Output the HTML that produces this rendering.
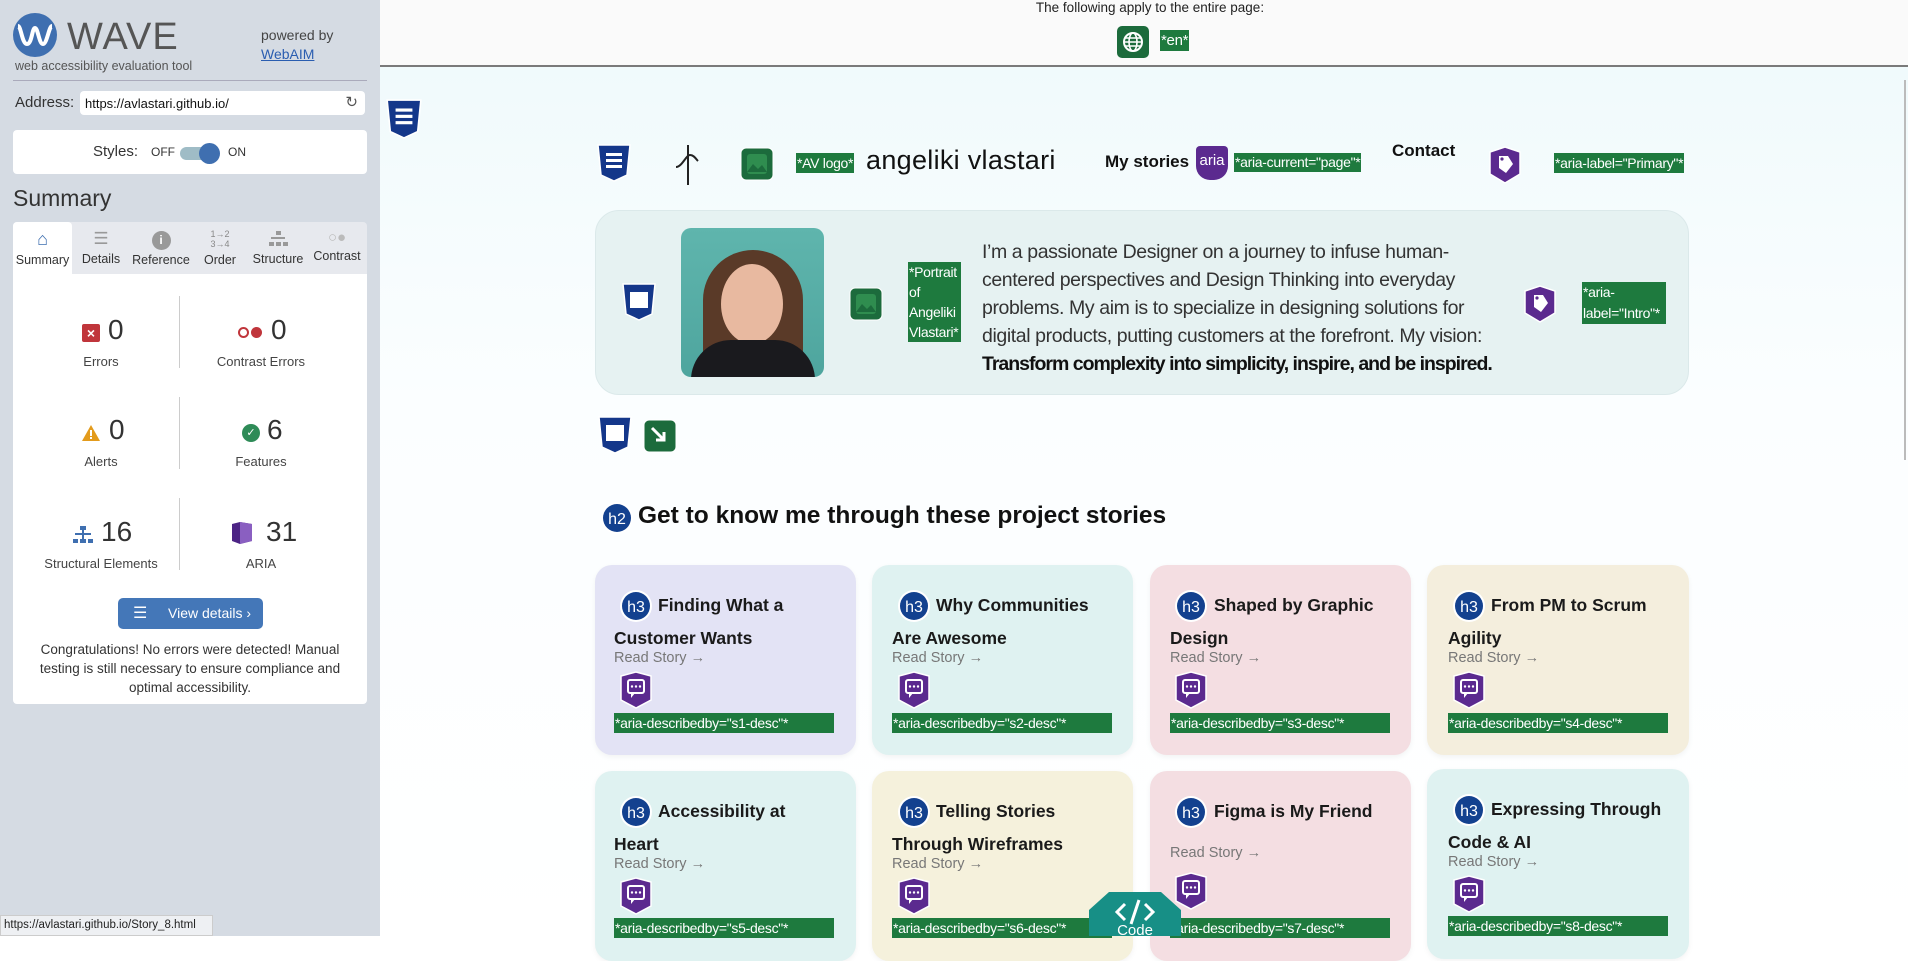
<!DOCTYPE html>
<html><head><meta charset="utf-8">
<style>
*{box-sizing:border-box;margin:0;padding:0}
body{width:1908px;height:936px;overflow:hidden;position:relative;font-family:"Liberation Sans",sans-serif;background:#fff}
.a{position:absolute}
#side{left:0;top:0;width:380px;height:936px;background:#d5dbe3}
#main{left:380px;top:0;width:1528px;height:936px;background:linear-gradient(#eef9fb,#fbfeff 400px,#fff)}
#top{left:380px;top:0;width:1528px;height:67px;background:#fafafa;border-bottom:2px solid #7a7a7a}
.lab{background:#1e7a3e;color:#fff;font-size:14px;line-height:18px;padding:0 1px;white-space:nowrap;letter-spacing:-.3px}
.card{border-radius:17px;box-shadow:0 2px 6px rgba(0,0,0,.05)}
.ct{font-size:17.5px;font-weight:bold;color:#1a1a1a;white-space:nowrap}
.rs{font-size:14.5px;color:#777}
.tab{position:absolute;top:222px;height:52px;font-size:12.5px;color:#333;text-align:center}
.sl{font-size:13px;color:#444;text-align:center;width:160px;position:absolute}
.sn{font-size:28px;color:#333;position:absolute}
</style></head><body>
<div id="side" class="a"></div>
<svg class="a" style="left:12px;top:12px" width="46" height="46" viewBox="0 0 46 46"><circle cx="23" cy="23" r="22" fill="#3f6fb0"/><path d="M6 14c3 0 4 18 9 18s5-16 8-16 4 16 8 16 6-18 9-18" stroke="#fff" stroke-width="4" fill="none"/></svg>
<div class="a" style="left:67px;top:16px;font-size:38px;color:#555;letter-spacing:1px">WAVE</div>
<div class="a" style="left:15px;top:59px;font-size:12.5px;color:#555">web accessibility evaluation tool</div>
<div class="a" style="left:261px;top:27px;font-size:14px;color:#444">powered by</div>
<div class="a" style="left:261px;top:46px;font-size:14px;color:#2a5db0;text-decoration:underline">WebAIM</div>
<div class="a" style="left:13px;top:80px;width:354px;height:1px;background:#aab"></div>
<div class="a" style="left:15px;top:94px;font-size:15px;color:#333">Address:</div>
<div class="a" style="left:80px;top:91px;width:285px;height:24px;background:#fff;border-radius:4px;font-size:13px;padding:5px 5px;color:#111">https://avlastari.github.io/<span style="position:absolute;right:7px;top:2px;font-size:15px;color:#555">&#8635;</span></div>
<div class="a" style="left:13px;top:130px;width:354px;height:44px;background:#fff;border-radius:4px"></div>
<div class="a" style="left:93px;top:143px;font-size:15px;color:#333">Styles:</div>
<div class="a" style="left:151px;top:145px;font-size:12px;color:#333">OFF</div>
<div class="a" style="left:180px;top:147px;width:38px;height:13px;background:#9fbcc6;border-radius:7px"></div>
<div class="a" style="left:199px;top:143px;width:21px;height:21px;background:#3f6fb0;border-radius:50%"></div>
<div class="a" style="left:228px;top:145px;font-size:12px;color:#333">ON</div>
<div class="a" style="left:13px;top:185px;font-size:23px;color:#333">Summary</div>
<div class="a" style="left:13px;top:222px;width:354px;height:52px;background:#e7e9ee;border-radius:4px 4px 0 0"></div>
<div class="tab" style="left:13px;width:59px;background:#fff;border-radius:4px 4px 0 0"><div style="margin-top:7px;color:#3f6fb0;font-size:18px">&#8962;</div><div style="margin-top:3px">Summary</div></div>
<div class="tab" style="left:74px;width:54px"><div style="margin-top:7px;color:#999;font-size:17px">&#9776;</div><div style="margin-top:3px">Details</div></div>
<div class="tab" style="left:130px;width:62px"><div style="margin:9px auto 0;width:19px;height:19px;border-radius:50%;background:#999;color:#fff;font-size:12px;font-weight:bold;line-height:19px">i</div><div style="margin-top:3px">Reference</div></div>
<div class="tab" style="left:196px;width:48px"><div style="margin-top:7px;color:#888;font-size:9px;line-height:10px">1&#8594;2<br>3&#8594;4</div><div style="margin-top:4px">Order</div></div>
<div class="tab" style="left:250px;width:56px"><svg style="margin-top:8px" width="20" height="18"><rect x="8" y="1" width="5" height="4" fill="#999"/><rect x="3" y="7" width="14" height="2" fill="#999"/><rect x="1" y="12" width="5" height="4" fill="#999"/><rect x="8" y="12" width="5" height="4" fill="#999"/><rect x="15" y="12" width="5" height="4" fill="#999"/></svg><div style="margin-top:1px">Structure</div></div>
<div class="tab" style="left:308px;width:58px"><div style="margin-top:7px;color:#bbb;font-size:15px">&#9675;&#9679;</div><div style="margin-top:3px">Contrast</div></div>
<div class="a" style="left:13px;top:274px;width:354px;height:430px;background:#fff;border-radius:0 0 4px 4px"></div>
<div class="a" style="left:179px;top:296px;width:1px;height:72px;background:#ccc"></div>
<div class="a" style="left:179px;top:397px;width:1px;height:72px;background:#ccc"></div>
<div class="a" style="left:179px;top:498px;width:1px;height:72px;background:#ccc"></div>
<div class="a" style="left:82px;top:324px;width:18px;height:18px;background:#c0353b;border-radius:2px;color:#fff;font-size:14px;font-weight:bold;text-align:center;line-height:18px">&#215;</div>
<div class="sn" style="left:108px;top:314px">0</div><div class="sl" style="left:21px;top:354px">Errors</div>
<div class="a" style="left:238px;top:327px;width:11px;height:11px;border:2px solid #c0353b;border-radius:50%"></div><div class="a" style="left:251px;top:327px;width:11px;height:11px;background:#c0353b;border-radius:50%"></div>
<div class="sn" style="left:271px;top:314px">0</div><div class="sl" style="left:181px;top:354px">Contrast Errors</div>
<svg class="a" style="left:81px;top:424px" width="20" height="18"><path d="M10 1L19 17H1z" fill="#e39b1c"/><rect x="9" y="6" width="2" height="6" fill="#fff"/><rect x="9" y="13" width="2" height="2" fill="#fff"/></svg>
<div class="sn" style="left:109px;top:414px">0</div><div class="sl" style="left:21px;top:454px">Alerts</div>
<div class="a" style="left:242px;top:424px;width:18px;height:18px;background:#2e8b57;border-radius:50%;color:#fff;font-size:11px;text-align:center;line-height:18px">&#10003;</div>
<div class="sn" style="left:267px;top:414px">6</div><div class="sl" style="left:181px;top:454px">Features</div>
<svg class="a" style="left:72px;top:525px" width="22" height="20"><rect x="8" y="1" width="6" height="4" fill="#3f6fb0"/><rect x="3" y="8" width="16" height="2" fill="#3f6fb0"/><rect x="1" y="14" width="5" height="4" fill="#3f6fb0"/><rect x="8" y="14" width="6" height="4" fill="#3f6fb0"/><rect x="16" y="14" width="5" height="4" fill="#3f6fb0"/><rect x="10" y="5" width="2" height="9" fill="#3f6fb0"/></svg>
<div class="sn" style="left:101px;top:516px">16</div><div class="sl" style="left:21px;top:556px">Structural Elements</div>
<svg class="a" style="left:230px;top:521px" width="24" height="24"><path d="M2 3l8-2 12 2v17l-12 3-8-3z" fill="#4c2485"/><path d="M10 1l12 2v17l-12 3z" fill="#8a5fc1"/></svg>
<div class="sn" style="left:266px;top:516px">31</div><div class="sl" style="left:181px;top:556px">ARIA</div>
<div class="a" style="left:118px;top:598px;width:145px;height:31px;background:#4477b8;border-radius:5px;color:#fff;font-size:14px;line-height:31px;padding-left:50px">View details ›<span style="position:absolute;left:15px;top:0;font-size:16px">&#9776;</span></div>
<div class="a" style="left:20px;top:640px;width:340px;text-align:center;font-size:13.5px;line-height:19px;color:#333">Congratulations! No errors were detected! Manual testing is still necessary to ensure compliance and optimal accessibility.</div>
<div class="a" style="left:0;top:915px;width:213px;height:21px;background:#eef0f3;border:1px solid #ccc;font-size:11.5px;line-height:19px;padding-left:3px;color:#222">https://avlastari.github.io/Story_8.html</div>

<div id="main" class="a"></div>
<div id="top" class="a"></div>
<div class="a" style="left:1000px;top:0;width:300px;text-align:center;font-size:13.5px;color:#222">The following apply to the entire page:</div>
<svg class="a" style="left:1117px;top:26px" width="32" height="32"><rect width="32" height="32" rx="5" fill="#1c6b3c"/><circle cx="16" cy="16" r="9" stroke="#fff" stroke-width="2" fill="none"/><ellipse cx="16" cy="16" rx="4" ry="9" stroke="#fff" stroke-width="1.6" fill="none"/><path d="M7 16h18M8 12h16M8 20h16" stroke="#fff" stroke-width="1.4"/></svg>
<div class="a lab" style="left:1160px;top:30px;height:21px;line-height:21px;font-size:15px">*en*</div>
<div class="a" style="left:1904px;top:80px;width:2px;height:380px;background:#bbb"></div>

<svg width="0" height="0" style="position:absolute"><defs>
<symbol id="bs" viewBox="0 0 34 38"><path d="M1 1h32l-3 30-13 6-13-6z" fill="#14378a" stroke="#fff" stroke-width="1.5"/><rect x="9" y="9" width="16" height="3" fill="#fff"/><rect x="9" y="15" width="16" height="3" fill="#fff"/><rect x="9" y="21" width="16" height="3" fill="#fff"/></symbol>
<symbol id="bs2" viewBox="0 0 34 38"><path d="M1 1h32l-3 30-13 6-13-6z" fill="#14378a" stroke="#fff" stroke-width="1.5"/><rect x="8" y="9" width="18" height="16" fill="#fff"/></symbol>
<symbol id="gi" viewBox="0 0 34 34"><rect x="1" y="1" width="32" height="32" rx="5" fill="#1c6b3c" stroke="#fff"/><rect x="7" y="7" width="20" height="20" rx="3" fill="#2f8d4f"/><path d="M7 25l6-8 5 5 4-4 5 7z" fill="#1c6b3c"/></symbol>
<symbol id="ps" viewBox="0 0 34 38"><path d="M2 6l15-5 15 5v22l-15 9-15-9z" fill="#5b2a8f" stroke="#fff" stroke-width="1.5"/><path d="M11 10h9l5 8-7 9-7-5z" fill="#fff"/><circle cx="14" cy="13" r="1.6" fill="#5b2a8f"/></symbol>
<symbol id="pc" viewBox="0 0 34 38"><path d="M2 5l15-4 15 4v24l-15 8-15-8z" fill="#5b2a8f" stroke="#fff" stroke-width="1.5"/><rect x="9" y="9" width="16" height="13" rx="2" fill="none" stroke="#fff" stroke-width="2"/><path d="M12 22v5l4-5" fill="#fff"/><circle cx="13" cy="15.5" r="1.2" fill="#fff"/><circle cx="17" cy="15.5" r="1.2" fill="#fff"/><circle cx="21" cy="15.5" r="1.2" fill="#fff"/></symbol>
<symbol id="h" viewBox="0 0 34 34"><circle cx="17" cy="17" r="16" fill="#fff"/><circle cx="17" cy="17" r="14" fill="#13418f"/></symbol>
</defs></svg>

<svg class="a" style="left:386px;top:99px" width="36" height="40"><use href="#bs"/></svg>

<svg class="a" style="left:597px;top:144px" width="34" height="38"><use href="#bs"/></svg>
<svg class="a" style="left:668px;top:142px" width="46" height="46"><path d="M20 3v40M8 25c6 0 10-12 14-12s6 4 8 6" stroke="#222" stroke-width="2" fill="none"/></svg>
<svg class="a" style="left:740px;top:147px" width="34" height="34"><use href="#gi"/></svg>
<div class="a lab" style="left:796px;top:153px;height:20px;line-height:20px;font-size:14px">*AV logo*</div>
<div class="a" style="left:866px;top:145px;font-size:27px;color:#111;letter-spacing:.3px">angeliki vlastari</div>
<div class="a" style="left:1105px;top:152px;font-size:17px;font-weight:bold;color:#111">My stories</div>
<div class="a" style="left:1196px;top:146px;width:32px;height:34px;background:#5b2a8f;border-radius:4px 4px 14px 14px;color:#fff;font-size:15px;line-height:30px;text-align:center">aria</div>
<div class="a lab" style="left:1234px;top:153px;height:19px">*aria-current="page"*</div>
<div class="a" style="left:1392px;top:141px;font-size:17px;font-weight:bold;color:#111">Contact</div>
<svg class="a" style="left:1488px;top:146px" width="34" height="38"><use href="#ps"/></svg>
<div class="a lab" style="left:1554px;top:153px;height:20px;line-height:20px">*aria-label="Primary"*</div>

<div class="a" style="left:595px;top:210px;width:1094px;height:185px;background:#e6f2f2;border:1px solid #dbe9ea;border-radius:24px"></div>
<div class="a" style="left:681px;top:228px;width:143px;height:149px;border-radius:10px;background:linear-gradient(#5fb5ad,#4ea59e);overflow:hidden">
<div style="position:absolute;left:22px;top:22px;width:100px;height:150px;border-radius:50px 50px 10px 10px;background:#5a3a28"></div>
<div style="position:absolute;left:40px;top:36px;width:62px;height:80px;border-radius:50%;background:#e8b9a0"></div>
<div style="position:absolute;left:10px;top:112px;width:124px;height:60px;border-radius:40px 40px 0 0;background:#1a1a1e"></div>
</div>
<svg class="a" style="left:622px;top:283px" width="34" height="38"><use href="#bs2"/></svg>
<svg class="a" style="left:849px;top:287px" width="34" height="34"><use href="#gi"/></svg>
<div class="a lab" style="left:908px;top:262px;width:53px;height:80px;white-space:normal;line-height:20px;font-size:14px">*Portrait of Angeliki Vlastari*</div>
<div class="a" style="left:982px;top:238px;width:530px;font-size:19.5px;line-height:28px;color:#333;letter-spacing:-.4px">I’m a passionate Designer on a journey to infuse human-centered perspectives and Design Thinking into everyday problems. My aim is to specialize in designing solutions for digital products, putting customers at the forefront. My vision: <b style="color:#111;white-space:nowrap;letter-spacing:-1px">Transform complexity into simplicity, inspire, and be inspired.</b></div>
<svg class="a" style="left:1523px;top:285px" width="34" height="38"><use href="#ps"/></svg>
<div class="a lab" style="left:1582px;top:282px;width:84px;height:42px;white-space:normal;line-height:21px">*aria-label="Intro"*</div>

<svg class="a" style="left:598px;top:416px" width="34" height="38"><use href="#bs2"/></svg>
<svg class="a" style="left:643px;top:419px" width="34" height="34"><rect x="1" y="1" width="32" height="32" rx="5" fill="#1c6b3c" stroke="#fff"/><path d="M9 9l12 12M21 13v8h-8" stroke="#fff" stroke-width="3" fill="none"/></svg>

<svg class="a" style="left:600px;top:501px" width="34" height="34"><use href="#h"/><text x="17" y="23" fill="#fff" font-size="16" text-anchor="middle" font-family="Liberation Sans">h2</text></svg>
<div class="a" style="left:638px;top:502px;font-size:24.5px;font-weight:bold;color:#111">Get to know me through these project stories</div>

<div class="a card" style="left:595px;top:565px;width:261px;height:190px;background:#e3e3f5"></div>
<div class="a card" style="left:872px;top:565px;width:261px;height:190px;background:#dff2f1"></div>
<div class="a card" style="left:1150px;top:565px;width:261px;height:190px;background:#f4dee2"></div>
<div class="a card" style="left:1427px;top:565px;width:262px;height:190px;background:#f4eedd"></div>
<div class="a card" style="left:595px;top:771px;width:261px;height:190px;background:#dff2f1"></div>
<div class="a card" style="left:872px;top:771px;width:261px;height:190px;background:#f5f1dc"></div>
<div class="a card" style="left:1150px;top:771px;width:261px;height:190px;background:#f4dee2"></div>
<div class="a card" style="left:1427px;top:769px;width:262px;height:190px;background:#dff2f1"></div>

<svg class="a" style="left:619px;top:589px" width="34" height="34"><use href="#h"/><text x="17" y="23" fill="#fff" font-size="16" text-anchor="middle" font-family="Liberation Sans">h3</text></svg>
<div class="a ct" style="left:658px;top:595px">Finding What a</div><div class="a ct" style="left:614px;top:628px">Customer Wants</div>
<div class="a rs" style="left:614px;top:650px">Read Story →</div>
<svg class="a" style="left:619px;top:671px" width="34" height="38"><use href="#pc"/></svg>
<div class="a lab" style="left:614px;top:713px;width:220px;height:20px;line-height:20px">*aria-describedby="s1-desc"*</div>

<svg class="a" style="left:897px;top:589px" width="34" height="34"><use href="#h"/><text x="17" y="23" fill="#fff" font-size="16" text-anchor="middle" font-family="Liberation Sans">h3</text></svg>
<div class="a ct" style="left:936px;top:595px">Why Communities</div><div class="a ct" style="left:892px;top:628px">Are Awesome</div>
<div class="a rs" style="left:892px;top:650px">Read Story →</div>
<svg class="a" style="left:897px;top:671px" width="34" height="38"><use href="#pc"/></svg>
<div class="a lab" style="left:892px;top:713px;width:220px;height:20px;line-height:20px">*aria-describedby="s2-desc"*</div>

<svg class="a" style="left:1174px;top:589px" width="34" height="34"><use href="#h"/><text x="17" y="23" fill="#fff" font-size="16" text-anchor="middle" font-family="Liberation Sans">h3</text></svg>
<div class="a ct" style="left:1214px;top:595px">Shaped by Graphic</div><div class="a ct" style="left:1170px;top:628px">Design</div>
<div class="a rs" style="left:1170px;top:650px">Read Story →</div>
<svg class="a" style="left:1174px;top:671px" width="34" height="38"><use href="#pc"/></svg>
<div class="a lab" style="left:1170px;top:713px;width:220px;height:20px;line-height:20px">*aria-describedby="s3-desc"*</div>

<svg class="a" style="left:1452px;top:589px" width="34" height="34"><use href="#h"/><text x="17" y="23" fill="#fff" font-size="16" text-anchor="middle" font-family="Liberation Sans">h3</text></svg>
<div class="a ct" style="left:1491px;top:595px">From PM to Scrum</div><div class="a ct" style="left:1448px;top:628px">Agility</div>
<div class="a rs" style="left:1448px;top:650px">Read Story →</div>
<svg class="a" style="left:1452px;top:671px" width="34" height="38"><use href="#pc"/></svg>
<div class="a lab" style="left:1448px;top:713px;width:220px;height:20px;line-height:20px">*aria-describedby="s4-desc"*</div>

<svg class="a" style="left:619px;top:795px" width="34" height="34"><use href="#h"/><text x="17" y="23" fill="#fff" font-size="16" text-anchor="middle" font-family="Liberation Sans">h3</text></svg>
<div class="a ct" style="left:658px;top:801px">Accessibility at</div><div class="a ct" style="left:614px;top:834px">Heart</div>
<div class="a rs" style="left:614px;top:856px">Read Story →</div>
<svg class="a" style="left:619px;top:877px" width="34" height="38"><use href="#pc"/></svg>
<div class="a lab" style="left:614px;top:918px;width:220px;height:20px;line-height:20px">*aria-describedby="s5-desc"*</div>

<svg class="a" style="left:897px;top:795px" width="34" height="34"><use href="#h"/><text x="17" y="23" fill="#fff" font-size="16" text-anchor="middle" font-family="Liberation Sans">h3</text></svg>
<div class="a ct" style="left:936px;top:801px">Telling Stories</div><div class="a ct" style="left:892px;top:834px">Through Wireframes</div>
<div class="a rs" style="left:892px;top:856px">Read Story →</div>
<svg class="a" style="left:897px;top:877px" width="34" height="38"><use href="#pc"/></svg>
<div class="a lab" style="left:892px;top:918px;width:220px;height:20px;line-height:20px">*aria-describedby="s6-desc"*</div>

<svg class="a" style="left:1174px;top:795px" width="34" height="34"><use href="#h"/><text x="17" y="23" fill="#fff" font-size="16" text-anchor="middle" font-family="Liberation Sans">h3</text></svg>
<div class="a ct" style="left:1214px;top:801px">Figma is My Friend</div>
<div class="a rs" style="left:1170px;top:845px">Read Story →</div>
<svg class="a" style="left:1174px;top:872px" width="34" height="38"><use href="#pc"/></svg>
<div class="a lab" style="left:1170px;top:918px;width:220px;height:20px;line-height:20px">*aria-describedby="s7-desc"*</div>

<svg class="a" style="left:1452px;top:793px" width="34" height="34"><use href="#h"/><text x="17" y="23" fill="#fff" font-size="16" text-anchor="middle" font-family="Liberation Sans">h3</text></svg>
<div class="a ct" style="left:1491px;top:799px">Expressing Through</div><div class="a ct" style="left:1448px;top:832px">Code &amp; AI</div>
<div class="a rs" style="left:1448px;top:854px">Read Story →</div>
<svg class="a" style="left:1452px;top:875px" width="34" height="38"><use href="#pc"/></svg>
<div class="a lab" style="left:1448px;top:916px;width:220px;height:20px;line-height:20px">*aria-describedby="s8-desc"*</div>

<svg class="a" style="left:1089px;top:892px" width="92" height="44"><path d="M20 0h52l20 18v26H0V18z" fill="#178f86"/><path d="M36 12l-8 8 8 8M56 12l8 8-8 8M50 8l-8 24" stroke="#fff" stroke-width="3" fill="none"/><text x="46" y="43" fill="#fff" font-size="15" text-anchor="middle" font-family="Liberation Sans">Code</text></svg>
</body></html>
